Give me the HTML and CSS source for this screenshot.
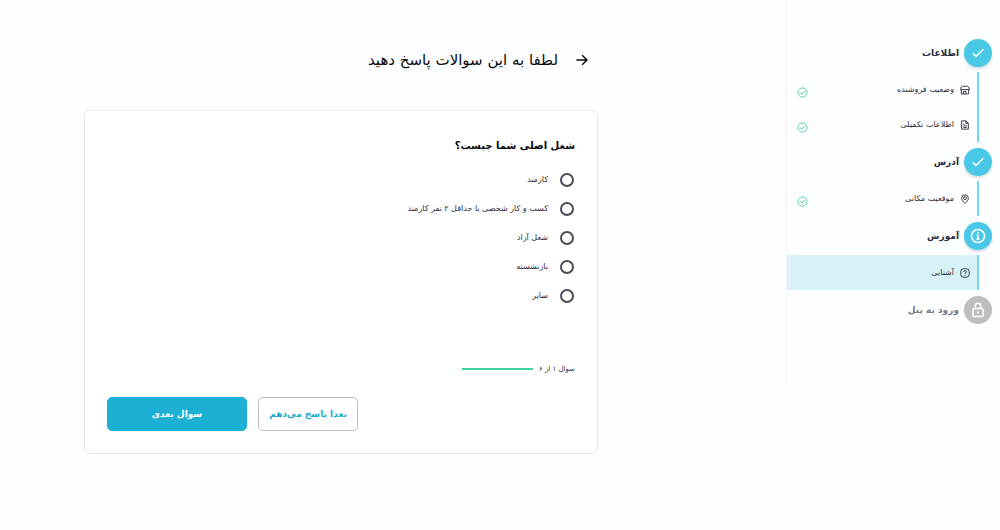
FILE: index.html
```html
<!DOCTYPE html>
<html lang="fa" dir="rtl">
<head>
<meta charset="utf-8">
<title>آشنایی</title>
<link rel="stylesheet" href="styles.css">
</head>
<body>
<div class="layout">
  <nav class="sidebar">
    <div class="step">
      <span class="step-badge"><svg width="14" height="14" viewBox="0 0 14 14"><path d="M1.800 7.400 5 10.500 12.300 3.200"/></svg></span>
      <span class="step-title">اطلاعات</span>
    </div>
    <ul class="items">
      <li><a class="item" href="#">
        <svg class="item-icon" viewBox="0 0 12 12"><path d="M3 1.500h6Q11 1.500 11.300 5.500H.7Q1 1.500 3 1.500zM1.600 5.500v5.300h8.800V5.500M4 10.800V7.700h3.200v3.100"/></svg>
        <span class="item-label">وضعیت فروشنده</span>
        <svg class="done" viewBox="0 0 12 12"><circle cx="6" cy="6" r="5"/><path d="M3.500 6.100 5.400 7.800 8.600 4.200"/></svg>
      </a></li>
      <li><a class="item" href="#">
        <svg class="item-icon" viewBox="0 0 12 12"><path d="M2 1h5l3 3v7H2zM7 1v3h3M4 5h1.500M4 7h4M4 9h4"/></svg>
        <span class="item-label">اطلاعات تکمیلی</span>
        <svg class="done" viewBox="0 0 12 12"><circle cx="6" cy="6" r="5"/><path d="M3.500 6.100 5.400 7.800 8.600 4.200"/></svg>
      </a></li>
    </ul>
    <div class="step">
      <span class="step-badge"><svg width="14" height="14" viewBox="0 0 14 14"><path d="M1.800 7.400 5 10.500 12.300 3.200"/></svg></span>
      <span class="step-title">آدرس</span>
    </div>
    <ul class="items">
      <li><a class="item" href="#">
        <svg class="item-icon" viewBox="0 0 12 12"><path d="M6 11.300C3.300 9 2 7 2 5a4 4 0 0 1 8 0c0 2-1.300 4-4 6.300z"/><circle cx="6" cy="5" r="1.700"/></svg>
        <span class="item-label">موقعیت مکانی</span>
        <svg class="done" viewBox="0 0 12 12"><circle cx="6" cy="6" r="5"/><path d="M3.500 6.100 5.400 7.800 8.600 4.200"/></svg>
      </a></li>
    </ul>
    <div class="step">
      <span class="step-badge"><svg width="16" height="16" viewBox="0 0 16 16"><circle cx="8" cy="8" r="6.500"/><path d="M6.700 7.200H8v4M6.500 11.300h3"/><path d="M8 4v1.600"/></svg></span>
      <span class="step-title">آموزش</span>
    </div>
    <ul class="items">
      <li><a class="item item-active" href="#" aria-current="page">
        <svg class="item-icon" viewBox="0 0 12 12"><rect x="1" y="1" width="10" height="10" rx="3"/><path d="M4.400 4.800C4.400 2.600 7.700 2.700 7.700 4.700 7.700 5.800 6 5.800 6 7.200M6 8.300v1"/></svg>
        <span class="item-label">آشنایی</span>
      </a></li>
    </ul>
    <div class="step step-locked">
      <span class="step-badge"><svg width="16" height="16" viewBox="0 0 16 16"><rect x="3" y="6.500" width="10" height="8" rx="1"/><path d="M5.300 6.500V4a2.700 2.700 0 0 1 5.400 0v2.500M7 10.500h2"/></svg></span>
      <span class="step-title">ورود به پنل</span>
    </div>
  </nav>

  <main class="content">
    <header class="page-head">
      <a class="back" href="#" aria-label="بازگشت"><svg width="12" height="12" viewBox="0 0 12 12"><path d="M0.500 6h10.500M6.200 1.200 11 6l-4.800 4.800"/></svg></a>
      <h1 class="page-title">لطفا به این سوالات پاسخ دهید</h1>
    </header>
    <form class="card">
      <fieldset class="question">
        <legend class="question-title">شغل اصلی شما چیست؟</legend>
        <label class="option"><input class="radio" type="radio" name="job">کارمند</label>
        <label class="option"><input class="radio" type="radio" name="job">کسب و کار شخصی با حداقل ۲ نفر کارمند</label>
        <label class="option"><input class="radio" type="radio" name="job">شغل آزاد</label>
        <label class="option"><input class="radio" type="radio" name="job">بازنشسته</label>
        <label class="option"><input class="radio" type="radio" name="job">سایر</label>
      </fieldset>
      <div class="progress">
        <span>سوال ۱ از ۶</span>
        <span class="progress-bar"></span>
      </div>
      <div class="actions">
        <button class="button button-outline" type="button">بعدا پاسخ می‌دهم</button>
        <button class="button button-primary" type="submit">سوال بعدی</button>
      </div>
    </form>
  </main>
</div>
</body>
</html>
```
FILE: styles.css
```css
* {
  box-sizing: border-box;
}

body {
  margin: 0;
  background: #fdfeff;
  color: #2b2d3a;
  font-family: "DejaVu Sans", sans-serif;
  font-size: 8px;
}

svg {
  flex: none;
  fill: none;
  stroke: currentColor;
}

a {
  color: inherit;
  text-decoration: none;
}

.layout {
  display: flex;
  align-items: flex-start;
}

.sidebar {
  flex: none;
  display: flex;
  flex-direction: column;
  gap: 5px;
  width: 214px;
  padding: 39px 0 62px;
  border-left: 1px solid #f1f3f5;
}

.step {
  display: flex;
  align-items: center;
  gap: 5px;
  padding-right: 8px;
}

.step-badge {
  display: flex;
  align-items: center;
  justify-content: center;
  width: 28px;
  height: 28px;
  border-radius: 50%;
  background: #4ac9e7;
  box-shadow: 0 2px 3px #00000024;
  color: #fff;
}

.step-badge svg {
  stroke-width: 1.5;
}

.step-title {
  font-size: 9px;
  font-weight: bold;
  line-height: 20px;
}

.step-locked {
  color: #777983;
}

.step-locked .step-badge {
  background: #bdbec2;
  box-shadow: none;
}

.items {
  margin: 0 21px 1px 0;
  padding: 0;
  border-right: 2px solid #71d6ed;
  list-style: none;
}

.item {
  display: flex;
  align-items: center;
  gap: 6px;
  height: 35px;
  padding: 0 7px 0 10px;
}

.item-active {
  background: #d7f1f7;
}

.item-icon {
  width: 10px;
  height: 10px;
  stroke-width: 1.1;
}

.item-label {
  flex: 1;
}

.done {
  width: 11px;
  height: 11px;
  margin-top: 5px;
  color: #4fcfa0;
}

.content {
  flex: 1;
  padding: 48px 188px 24px 84px;
}

.page-head {
  display: flex;
  align-items: center;
  gap: 18px;
  padding-right: 10px;
  color: #08090d;
}

.back {
  display: flex;
}

.back svg {
  stroke-width: 1.5;
}

.page-title {
  margin: 0;
  font-size: 15px;
  font-weight: normal;
  line-height: 24px;
}

.card {
  margin-top: 38px;
  padding: 25px 22px 22px;
  border: 1px solid #e4e7ea;
  border-radius: 6px;
  background: #fff;
}

.question {
  margin: 0;
  padding: 0;
  border: 0;
}

.question-title {
  margin-bottom: 9px;
  padding: 0;
  color: #08090d;
  font-size: 10px;
  font-weight: bold;
  line-height: 20px;
}

.option {
  display: flex;
  align-items: center;
  gap: 12px;
  height: 29px;
  padding-right: 1px;
}

.radio {
  appearance: none;
  width: 14px;
  height: 14px;
  margin: 0;
  border: 2px solid #4a4d58;
  border-radius: 50%;
}

.radio:checked {
  background: #1cb0d5;
  box-shadow: inset 0 0 0 2px #fff;
}

.progress {
  display: flex;
  align-items: center;
  gap: 6px;
  margin-top: 49px;
  font-size: 7px;
  line-height: 20px;
}

.progress-bar {
  width: 71px;
  height: 2px;
  background: #43cda4;
}

.actions {
  display: flex;
  justify-content: flex-end;
  gap: 11px;
  margin-top: 18px;
}

.button {
  height: 34px;
  padding: 0;
  border: 1px solid #b9bbc0;
  border-radius: 5px;
  font: bold 9px "DejaVu Sans", sans-serif;
}

.button-outline {
  width: 100px;
  background: #fff;
  color: #1cabd0;
}

.button-primary {
  width: 140px;
  border-color: #1cb0d5;
  background: #1cb0d5;
  color: #fff;
}
```
